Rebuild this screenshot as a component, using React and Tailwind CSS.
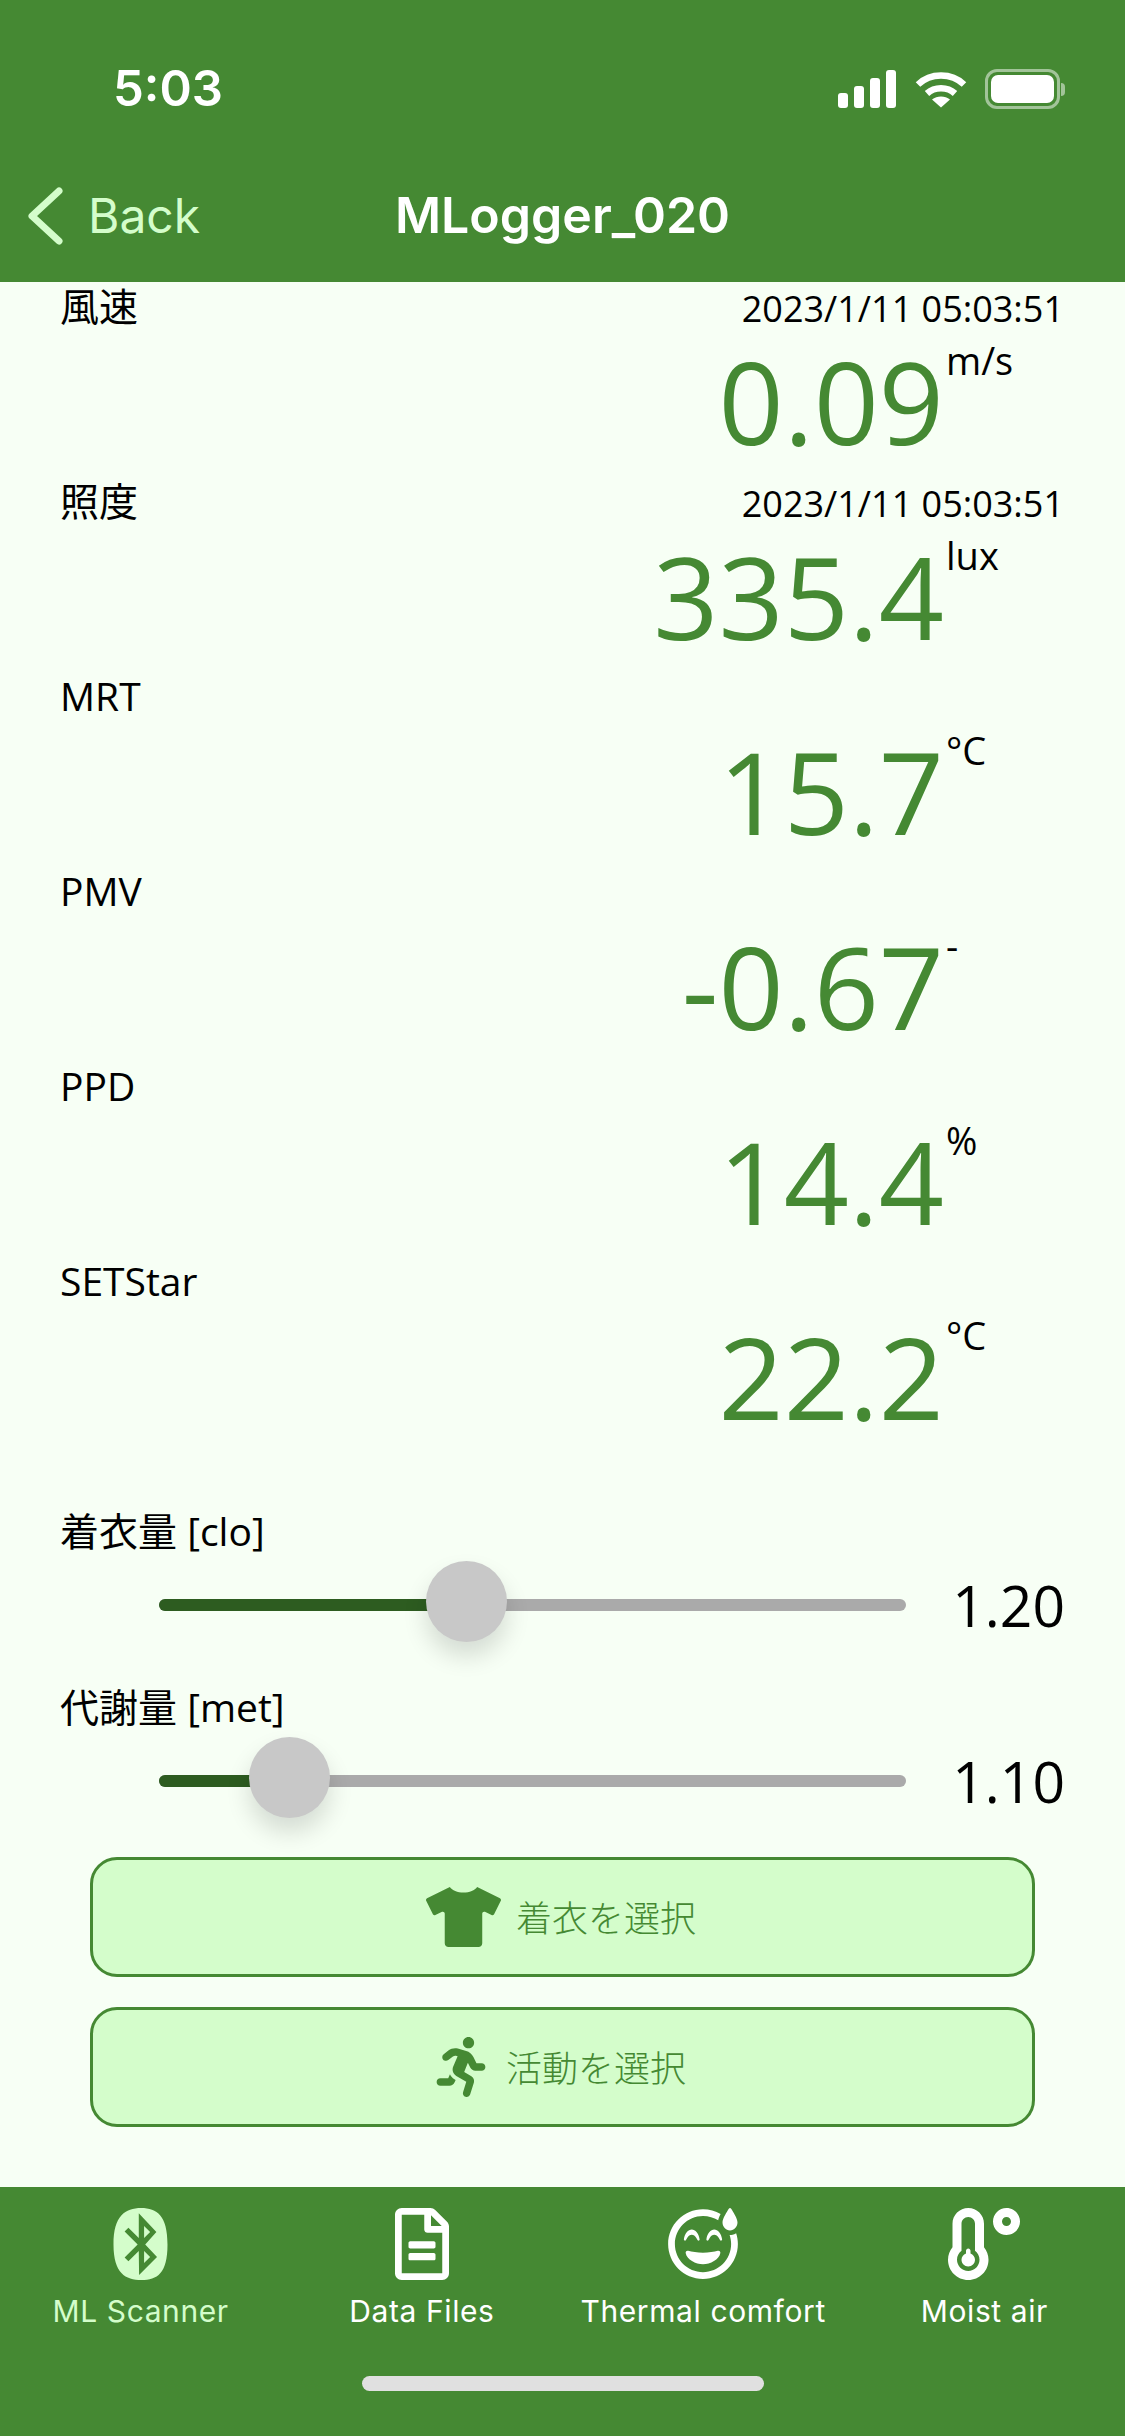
import React from "react";
import {
    FaBluetooth,
    FaRegFileAlt,
    FaRegGrinBeamSweat,
    FaRunning,
    FaTemperatureLow,
    FaTshirt,
} from "react-icons/fa";

const readings = [
    { label: "風速", date: "2023/1/11 05:03:51", value: "0.09", unit: "m/s" },
    { label: "照度", date: "2023/1/11 05:03:51", value: "335.4", unit: "lux" },
    { label: "MRT", value: "15.7", unit: "°C" },
    { label: "PMV", value: "-0.67", unit: "-" },
    { label: "PPD", value: "14.4", unit: "%" },
    { label: "SETStar", value: "22.2", unit: "°C" },
];

const StatusIcons = () => (
    <div className="flex items-center">
        {/* signal */}
        <svg width="58" height="38" viewBox="0 0 58 38" fill="#fff">
            <rect x="0" y="23" width="10" height="15" rx="3" />
            <rect x="16" y="16" width="10" height="22" rx="3" />
            <rect x="32" y="8" width="10" height="30" rx="3" />
            <rect x="48" y="0" width="10" height="38" rx="3" />
        </svg>
        {/* wifi */}
        <svg className="ml-[19px]" width="52" height="37" viewBox="0 0 52 37" fill="none" stroke="#fff" strokeWidth="6.5">
            <path d="M3 13.5C15.5 1.5 36.5 1.5 49 13.5" />
            <path d="M12 22.5C19.5 15.5 32.5 15.5 40 22.5" />
            <path d="M26 36.5L17 28.5C22 24.5 30 24.5 35 28.5Z" fill="#fff" stroke="none" />
        </svg>
        {/* battery */}
        <div className="ml-[18px] flex items-center">
            <div className="w-[75px] h-[40px] rounded-[12px] border-[3px] border-white/50 p-[3px]">
                <div className="w-full h-full rounded-[7px] bg-white"></div>
            </div>
            <div className="ml-[1px] w-[4px] h-[13px] rounded-r-full bg-white/50"></div>
        </div>
    </div>
);

const Slider = ({ label, value, fillClass, thumbClass, heightClass }) => (
    <div className={heightClass}>
        <div className="h-[50px] text-[39px] leading-[47px] text-black">{label}</div>
        <div className="h-[96px] flex items-center pl-[99px] pr-[60px]">
            <div className="relative w-[747px] h-[12px] rounded-full bg-[#aaaaaa]">
                <div className={`h-full rounded-l-full bg-[#2d5c20] ${fillClass}`}></div>
                <div className={`absolute top-[-38px] w-[81px] h-[81px] rounded-full bg-[#c8c8c8] shadow-[0_14px_24px_rgba(0,0,0,0.14)] ${thumbClass}`}></div>
            </div>
            <div className="ml-auto text-[57px] leading-none text-black">{value}</div>
        </div>
    </div>
);

const SelectButton = ({ icon, text, gapClass }) => (
    <button className={`h-[120px] flex items-center justify-center pr-[3px] rounded-[27px] border-[3px] border-[#458933] bg-[#d4fdcb] text-[36px] font-light text-[#458933] ${gapClass}`}>
        {icon}
        <span className="mt-[3px]">{text}</span>
    </button>
);

const Tab = ({ icon, label, colorClass }) => (
    <div className={`flex flex-col items-center ${colorClass}`}>
        <div className="h-[72px] flex items-center justify-center">{icon}</div>
        <div className="mt-[11px] font-['Inter',sans-serif] text-[30px] leading-[40px] tracking-[0.6px]">{label}</div>
    </div>
);

const App = () => {
    return (
        <div className="w-[1125px] h-[2436px] flex flex-col bg-[#f7fff5] font-['Open_Sans','Noto_Sans_CJK_JP',sans-serif] overflow-hidden">
            {/* Header */}
            <div className="h-[282px] bg-[#458933] text-white font-['Inter',sans-serif]">
                <div className="h-[178px] flex items-center justify-between pl-[113px] pr-[60px]">
                    <span className="text-[49px] font-semibold">5:03</span>
                    <StatusIcons />
                </div>
                <div className="grid grid-cols-[1fr_auto_1fr] items-center">
                    <div className="flex items-center pl-[27px] text-[#d4fdcb]">
                        <svg width="36" height="58" viewBox="0 0 36 58" fill="none" stroke="#d4fdcb" strokeWidth="7" strokeLinecap="round" strokeLinejoin="round">
                            <path d="M32 4L5 29L32 54" />
                        </svg>
                        <span className="ml-[25px] text-[48px]">Back</span>
                    </div>
                    <span className="text-[50px] font-semibold">MLogger_020</span>
                    <div></div>
                </div>
            </div>

            {/* Main */}
            <div className="flex-1 -mt-[1px]">
                {readings.map((r) => (
                    <div key={r.label} className="h-[195px]">
                        <div className="h-[50px] flex justify-between pl-[60px] pr-[61px] text-[39px] leading-[50px] text-black">
                            <span>{r.label}</span>
                            <span className="mt-[3px] text-[36px]">{r.date}</span>
                        </div>
                        <div className="grid grid-cols-[944px_1fr]">
                            <div className="text-right text-[114px] leading-[140px] text-[#458933]">{r.value}</div>
                            <div className="mt-[4px] ml-[2px] text-[38px] leading-[50px] text-black">{r.unit}</div>
                        </div>
                    </div>
                ))}

                <div className="mt-[56px] pl-[60px]">
                    <Slider label="着衣量 [clo]" value="1.20" fillClass="w-[300px]" thumbClass="left-[267px]" heightClass="h-[176px]" />
                    <Slider label="代謝量 [met]" value="1.10" fillClass="w-[120px]" thumbClass="left-[90px]" heightClass="h-[174px]" />
                </div>

                <div className="flex flex-col gap-[30px] px-[90px]">
                    <SelectButton
                        icon={<FaTshirt className="w-[75px] h-[60px]" />}
                        text="着衣を選択"
                        gapClass="gap-[15px]"
                    />
                    <SelectButton
                        icon={<FaRunning className="w-[50px] h-[60px]" />}
                        text="活動を選択"
                        gapClass="gap-[20px]"
                    />
                </div>
            </div>

            {/* Tab bar */}
            <div className="h-[249px] bg-[#458933] pt-[21px]">
                <div className="grid grid-cols-4">
                    <Tab icon={<FaBluetooth className="w-[63px] h-[72px]" />} label="ML Scanner" colorClass="text-[#d4fdcb]" />
                    <Tab icon={<FaRegFileAlt className="w-[54px] h-[72px]" />} label="Data Files" colorClass="text-white" />
                    <Tab icon={<FaRegGrinBeamSweat className="w-[70px] h-[72px]" />} label="Thermal comfort" colorClass="text-white" />
                    <Tab icon={<FaTemperatureLow className="w-[72px] h-[72px]" />} label="Moist air" colorClass="text-white" />
                </div>
                <div className="mx-auto mt-[45px] w-[402px] h-[15px] rounded-full bg-[#e0e0e0]"></div>
            </div>
        </div>
    );
};

export default App;
